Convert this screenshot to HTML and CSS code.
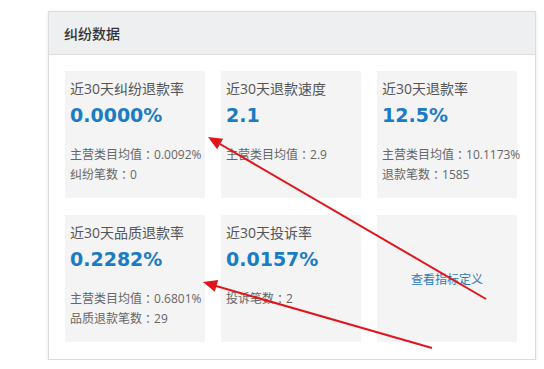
FILE: index.html
```html
<!DOCTYPE html>
<html lang="zh-CN">
<head>
    <meta charset="UTF-8">
    <title>纠纷数据</title>
    <link rel="stylesheet" href="styles.css">
</head>
<body>

    <div class="panel">

        <div class="panel-head">纠纷数据</div>

        <div class="panel-body">

            <div class="card">
                <p class="title">近30天纠纷退款率</p>
                <p class="value">0.0000%</p>
                <p class="sub">主营类目均值<span class="colon">：</span>0.0092%</p>
                <p class="sub">纠纷笔数<span class="colon">：</span>0</p>
            </div>

            <div class="card">
                <p class="title">近30天退款速度</p>
                <p class="value">2.1</p>
                <p class="sub">主营类目均值<span class="colon">：</span>2.9</p>
            </div>

            <div class="card">
                <p class="title">近30天退款率</p>
                <p class="value">12.5%</p>
                <p class="sub">主营类目均值<span class="colon">：</span>10.1173%</p>
                <p class="sub">退款笔数<span class="colon">：</span>1585</p>
            </div>

            <div class="card">
                <p class="title">近30天品质退款率</p>
                <p class="value">0.2282%</p>
                <p class="sub">主营类目均值<span class="colon">：</span>0.6801%</p>
                <p class="sub">品质退款笔数<span class="colon">：</span>29</p>
            </div>

            <div class="card">
                <p class="title">近30天投诉率</p>
                <p class="value">0.0157%</p>
                <p class="sub">投诉笔数<span class="colon">：</span>2</p>
            </div>

            <div class="card card-link">
                <a href="#">查看指标定义</a>
            </div>

        </div>

    </div>

    <!-- annotation arrows drawn over the screenshot -->
    <svg class="marks" width="544" height="369" viewBox="0 0 544 369">
        <line x1="486" y1="299" x2="220" y2="144" stroke="#e0161c" stroke-width="2"/>
        <polygon points="208,137 223.1,138.8 217.1,149.2" fill="#e0161c"/>
        <line x1="432" y1="348" x2="216" y2="286" stroke="#e0161c" stroke-width="2"/>
        <polygon points="203,282 218.2,280.1 214.8,291.7" fill="#e0161c"/>
    </svg>

</body>
</html>
```

FILE: styles.css
```css
body{
    margin: 0;
    padding: 11px 0 0 48px;
    font-family: "Open Sans", "Noto Sans CJK SC", sans-serif;
    background-color: #fff;
}

.panel{
    width: 488px;
    box-sizing: border-box;
    border: 1px solid #dcdcdc;
    box-shadow: 0 1px 3px rgba(0, 0, 0, .12);
    background-color: #fff;
}

.panel-head{
    height: 42px;
    line-height: 42px;
    padding-left: 15px;
    background-color: #eeeff1;
    border-bottom: 1px solid #dcdcdc;
    font-family: "Noto Sans CJK SC", sans-serif;
    font-size: 14px;
    font-weight: 500;
    color: #333;
}

.panel-body{
    display: grid;
    grid-template-columns: repeat(3, 140px);
    grid-auto-rows: 127px;
    column-gap: 16px;
    row-gap: 17px;
    padding: 16px 17px 17px 16px;
}

.card{
    background-color: #f4f4f5;
    padding: 8px 0 0 5px;
    white-space: nowrap;
    color: #666;
}

.card p{
    margin: 0;
}

.title{
    font-size: 14px;
    line-height: 20px;
    color: #555;
}

.value{
    font-family: "DejaVu Sans", sans-serif;
    font-size: 19px;
    font-weight: bold;
    line-height: 32px;
    color: #1a7cc4;
    margin-bottom: 14px !important;
}

.sub{
    font-size: 12px;
    line-height: 20px;
}

/* centred full-width colon, as in the original */
.colon{
    font-feature-settings: "halt";
    padding: 0 3px;
}

.card-link{
    display: flex;
    align-items: center;
    justify-content: center;
    padding: 0;
}

.card-link a{
    font-size: 12px;
    color: #2b7bbd;
    text-decoration: none;
}

.marks{
    position: absolute;
    left: 0;
    top: 0;
    pointer-events: none;
}
```
